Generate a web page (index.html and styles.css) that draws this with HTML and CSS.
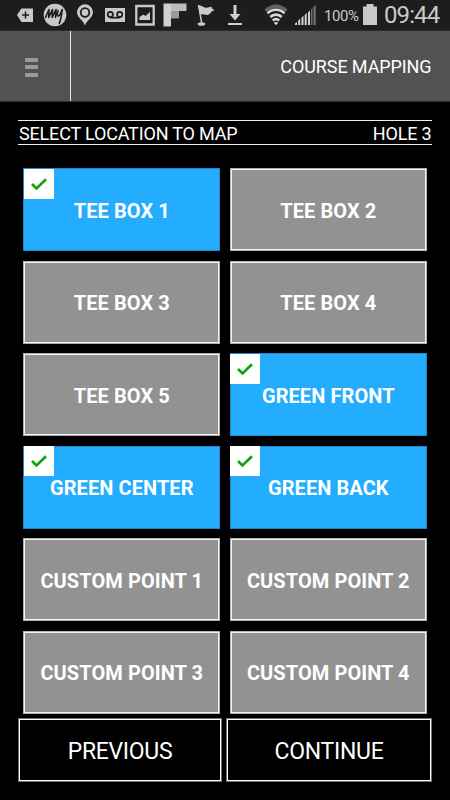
FILE: index.html
```html
<!DOCTYPE html>
<html lang="en">
<head>
<meta charset="utf-8">
<title>Course Mapping</title>
<link rel="stylesheet" href="styles.css">
</head>
<body>
<div class="status">
  <svg width="40" height="30" viewBox="0 0 40 30"><path d="M17 15l4.500-6.500h11.500v13.500H21.500z" fill="#c9c9c9"/><path d="M25.500 11.500v7M22 15h7" stroke="#1d1d1d" stroke-width="1.500"/></svg>
  <svg width="30" height="30" viewBox="40 0 30 30"><circle cx="55" cy="15" r="11.300" fill="#c9c9c9"/><path d="M45.500 17.500L49 9.500l-.3 8L52.500 9.500l-.3 8L56 9.500l-.5 8M58 10.500c-.8 3-1.200 5.500.3 5.500 1.600 0 2.700-3.500 4-6.500-.8 5-1.500 10.500-3 14" fill="none" stroke="#1d1d1d" stroke-width="1.600" stroke-linecap="round" stroke-linejoin="round"/></svg>
  <svg width="30" height="30" viewBox="70 0 30 30"><path d="M85 25.500c-1.500-5-8-8-8-13.200a8 8 0 0 1 16 0c0 5.200-6.500 8.200-8 13.200z" fill="#c9c9c9"/><circle cx="85" cy="12.500" r="4.300" fill="#c9c9c9" stroke="#1d1d1d" stroke-width="1.800"/></svg>
  <svg width="30" height="30" viewBox="100 0 30 30"><path d="M105 8h20v14h-20z" fill="#c9c9c9"/><g fill="none" stroke="#1d1d1d" stroke-width="1.700"><circle cx="110.300" cy="14.500" r="2.600"/><circle cx="119.700" cy="14.500" r="2.600"/><path d="M110.300 17.700h9.400"/></g></svg>
  <svg width="30" height="30" viewBox="130 0 30 30"><path d="M136.300 6h17.400v18.500h-17.400z" fill="none" stroke="#c9c9c9" stroke-width="2.300"/><path d="M139.500 20v-3l4-2.500 2 1.500 4.500-4V20z" fill="#c9c9c9"/></svg>
  <svg width="30" height="30" viewBox="160 0 30 30"><path d="M163.500 3.500h7.500v23h-7.500z" fill="#d0d0d0"/><path d="M171 3.500h15.500V11H171z" fill="#bdbdbd"/><path d="M171 11h8v7.500h-8z" fill="#9b9b9b"/></svg>
  <svg width="30" height="30" viewBox="190 0 30 30"><path d="M198 5.500c4-.5 6 2.500 8.500 2.300 2-.2 3.500-1.500 5-1 .5 2.500 1.500 2.500 3.300 3.400-4 .3-4.500 5-8 4.700-2.500-.2-4-1-6.300-.2z" fill="#c9c9c9"/><path d="M198.500 5l3.300 18.500" stroke="#c9c9c9" stroke-width="1.500"/><ellipse cx="201.500" cy="24" rx="3.800" ry="1.800" fill="#c9c9c9"/></svg>
  <svg width="40" height="30" viewBox="220 0 40 30"><path d="M233.500 5h3v9h4l-5.500 6.500-5.500-6.500h4zM228 23h14v2h-14z" fill="#d0d0d0"/></svg>
  <svg width="33" height="30" viewBox="260 0 33 30"><path d="M264.500 9.500a16 16 0 0 1 23 0l-2.300 2.500a13 13 0 0 0-18.400 0z" fill="#626262"/><g fill="none" stroke="#d8d8d8" stroke-width="2.600"><path d="M267.500 13.300a12 12 0 0 1 17 0"/><path d="M270.300 17a8 8 0 0 1 11.400 0"/><path d="M272.800 20.500a5 5 0 0 1 6.400 0"/></g><path d="M276 25.200l-2.200-2.400q2.200-1.600 4.400 0z" fill="#d8d8d8"/></svg>
  <svg width="31" height="30" viewBox="293 0 31 30"><path d="M295 25v-1.500l2-1.500v3zM298.200 25v-4.500l2-1.800V25zM301.500 25v-7.500l2-1.800V25zM304.700 25V15l2-2v12zM308 25V12.500l2-2V25z" fill="#d5d5d5"/><path d="M311 25V9.500l1.500-1.500v17zM313.500 25V7l2.300-2.200V25z" fill="#707070"/></svg>
  <span class="pct">100%</span>
  <svg class="battery" width="16" height="30" viewBox="362 0 16 30"><path d="M363 6.500h3.500V4h7v2.500h3.500V25h-14z" fill="#c9c9c9"/></svg>
  <span class="clock">09:44</span>
</div>
<header class="bar">
  <button class="menu" aria-label="Menu"><i></i><i></i><i></i></button>
  <h1>COURSE MAPPING</h1>
</header>
<div class="heading"><span class="select">SELECT LOCATION TO MAP</span><span class="hole">HOLE 3</span></div>
<main class="grid">
  <button class="tile on"><svg class="check" viewBox="0 0 30 30"><path d="M8 15l4.500 4.500L22 10.200"/></svg><span>TEE BOX 1</span></button>
  <button class="tile"><span>TEE BOX 2</span></button>
  <button class="tile"><span>TEE BOX 3</span></button>
  <button class="tile"><span>TEE BOX 4</span></button>
  <button class="tile"><span>TEE BOX 5</span></button>
  <button class="tile on"><svg class="check" viewBox="0 0 30 30"><path d="M8 15l4.500 4.500L22 10.200"/></svg><span>GREEN FRONT</span></button>
  <button class="tile on"><svg class="check" viewBox="0 0 30 30"><path d="M8 15l4.500 4.500L22 10.200"/></svg><span>GREEN CENTER</span></button>
  <button class="tile on"><svg class="check" viewBox="0 0 30 30"><path d="M8 15l4.500 4.500L22 10.200"/></svg><span>GREEN BACK</span></button>
  <button class="tile"><span>CUSTOM POINT 1</span></button>
  <button class="tile"><span>CUSTOM POINT 2</span></button>
  <button class="tile"><span>CUSTOM POINT 3</span></button>
  <button class="tile"><span>CUSTOM POINT 4</span></button>
</main>
<footer class="actions"><button>PREVIOUS</button><button>CONTINUE</button></footer>
</body>
</html>
```
FILE: styles.css
```css
* { box-sizing: border-box; }
body { margin: 0; width: 450px; height: 800px; overflow: hidden; background: #000; color: #fff; font-family: Roboto, "Liberation Sans", sans-serif; }
button { margin: 0; padding: 0; border: 0; border-radius: 0; background: none; color: inherit; font-family: inherit; }
svg { display: block; flex: none; }
.status { display: flex; height: 31px; background: #1d1d1d; border-bottom: 1px solid #292929; color: #c9c9c9; white-space: nowrap; }
.pct { width: 38px; font-size: 15px; line-height: 32px; letter-spacing: -.4px; }
.clock { margin-left: 6px; font-size: 24px; line-height: 30px; letter-spacing: -.9px; }
.bar { display: flex; align-items: center; justify-content: space-between; height: 71px; background: #525252; border-bottom: 1px solid #303030; }
.menu { display: flex; flex-direction: column; justify-content: center; gap: 3.500px; width: 71px; height: 70px; padding: 2px 0 0 25px; border-right: 1px solid #e8e8e8; }
.menu i { width: 13px; height: 4px; background: #999; }
h1 { margin: 0 18.500px 0 0; padding-top: 2px; font-size: 18px; font-weight: 400; line-height: 22px; letter-spacing: -.1px; }
.heading { display: flex; justify-content: space-between; height: 25px; margin: 18px 18px 0 18px; border: solid #eee; border-width: 1px 0; font-size: 18px; line-height: 25px; letter-spacing: -.17px; }
.select { padding-left: 1px; }
.hole { padding-right: .5px; }
.grid { display: grid; grid-template-columns: 197px 197px; grid-auto-rows: 83px; gap: 9.500px 9.500px; margin: 23.300px 0 0 23.300px; }
.tile { position: relative; border: 1px solid #b0b0b0; background: #929292; box-shadow: inset 0 0 0 1px #f4f4f4; font-size: 20px; font-weight: 700; line-height: 24px; padding-top: 2px; letter-spacing: .08px; }
.tile.on { border-color: #2287c5; background: #24adff; box-shadow: none; }
.check { position: absolute; top: 0; left: 0; width: 30px; height: 30px; margin: -.5px 0 0 -.6px; background: #fff; }
.check path { fill: none; stroke: #12a011; stroke-width: 2.600; }
.actions { display: grid; grid-template-columns: 204px 206px; gap: 4px; margin: 4.200px 0 0 18px; }
.actions button { height: 64px; padding-top: 4px; border: 1px solid #707070; box-shadow: inset 0 0 0 1px #fff; font-size: 23px; font-weight: 400; letter-spacing: -.3px; }
```
